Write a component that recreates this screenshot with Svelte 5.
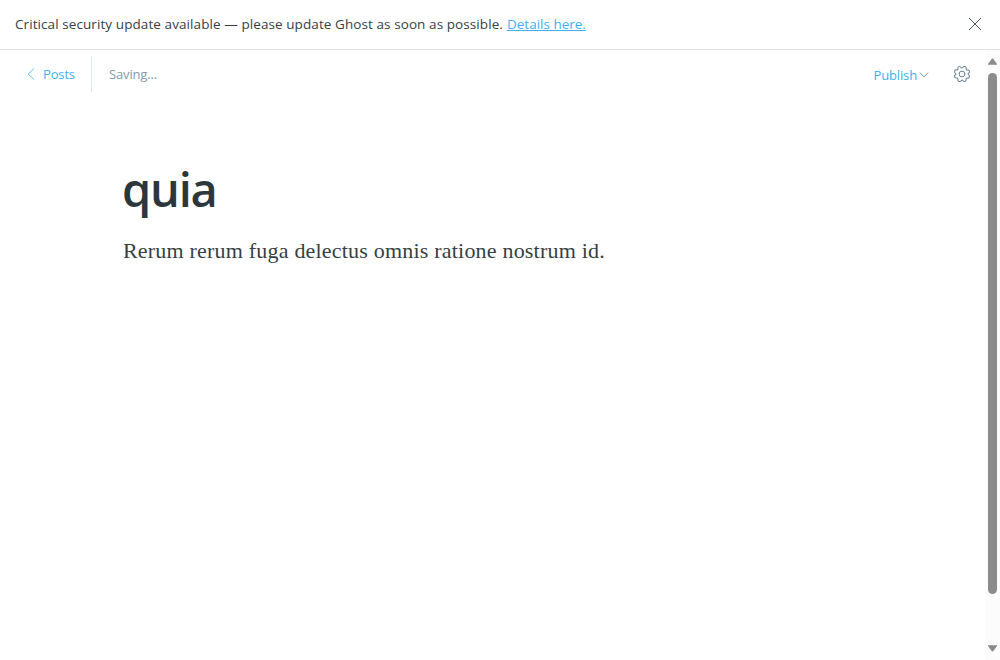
<script>
  const notice = 'Critical security update available — please update Ghost as soon as possible.';
  const title = 'quia';
  const body = 'Rerum rerum fuga delectus omnis ratione nostrum id.';
</script>

<div class="app">
  <aside class="alert">
    <div class="message"><span class="notice">{notice}</span><a href="#details">Details here.</a></div>
    <button class="close" aria-label="Close">
      <svg width="14" height="14" viewBox="0 0 14 14"><path d="M1 1l12 12M13 1L1 13" /></svg>
    </button>
  </aside>

  <div class="viewport">
    <main>
      <header>
        <a class="back" href="#posts">
          <svg width="8" height="12" viewBox="0 0 8 12"><path d="M7 .7L1.2 6 7 11.6" /></svg>
          <span>Posts</span>
        </a>
        <span class="status">Saving...</span>
        <button class="publish">
          <span>Publish</span>
          <svg width="10" height="6" viewBox="0 0 10 6"><path d="M1 .7l4 4.2L9 .7" /></svg>
        </button>
        <button class="settings" aria-label="Settings">
          <svg width="18" height="18" viewBox="0 0 18 18">
            <path d="M7.2 2.4C7.5.5 10.5.5 10.8 2.4C11.1 3.6 11.7 3.8 12.7 3.2C14.3 2.3 15.9 4 14.9 5.5C14.2 6.5 14.5 7 15.6 7.3C17.4 7.7 17.4 10.3 15.6 10.7C14.5 11 14.2 11.5 14.9 12.5C15.9 14 14.3 15.7 12.7 14.8C11.7 14.2 11.1 14.4 10.8 15.6C10.5 17.5 7.5 17.5 7.2 15.6C6.9 14.4 6.3 14.2 5.3 14.8C3.7 15.7 2.1 14 3.1 12.5C3.8 11.5 3.5 11 2.4 10.7C.6 10.3.6 7.7 2.4 7.3C3.5 7 3.8 6.5 3.1 5.5C2.1 4 3.7 2.3 5.3 3.2C6.3 3.8 6.9 3.6 7.2 2.4Z" transform="rotate(22.5 9 9)" />
            <circle cx="9" cy="9" r="2.9" />
          </svg>
        </button>
      </header>
      <article>
        <h1><span>{title}</span></h1>
        <p><span>{body}</span></p>
      </article>
    </main>
    <div class="scrollbar">
      <svg width="9" height="7" viewBox="0 0 9 7"><path d="M4 .5h1L9 6v.7H0V6z" /></svg>
      <div class="thumb"></div>
      <svg class="down" width="9" height="7" viewBox="0 0 9 7"><path d="M0 .3h9V1L5 6.5H4L0 1z" /></svg>
    </div>
  </div>
</div>

<style>
  :global(body) { margin: 0; background: #fff; }
  .app {
    display: flex;
    flex-direction: column;
    height: 660px;
    overflow: hidden;
    font: 13px/20px "Open Sans", "Noto Sans", sans-serif;
    color: #343f44;
  }
  button { border: 0; padding: 0; background: none; font: inherit; display: flex; align-items: center; }
  svg { display: block; fill: none; stroke: currentColor; flex: none; }
  a { color: #3eb0ef; }
  .alert {
    box-sizing: border-box;
    height: 50px;
    flex: none;
    display: flex;
    align-items: center;
    justify-content: space-between;
    padding: 0 18px 1px 15px;
    border-bottom: 1px solid #dfe1e3;
  }
  .message { display: flex; gap: 4px; white-space: nowrap; font-size: 13.5px; letter-spacing: 0; }
  .notice { letter-spacing: .083px; }
  .close { color: #4b555b; }
  .viewport { flex: 1; min-height: 0; display: flex; }
  main { flex: 1; }
  header { display: flex; align-items: center; height: 36px; padding: 6px 14px 0 27px; letter-spacing: -.15px; }
  .back {
    display: flex;
    align-items: center;
    gap: 8px;
    width: 64px;
    height: 36px;
    border-right: 1px solid #e0eaef;
    text-decoration: none;
  }
  .back svg { stroke-width: .8; }
  .status { margin-left: 17px; color: #839aa8; }
  .publish { margin-left: auto; color: #3eb0ef; gap: 2px; padding-top: 1px; letter-spacing: -.15px; }
  .publish svg { color: #6c96ac; }
  .settings { margin-left: 24px; color: #678192; }
  article { padding: 67px 122px 0; color: #343f44; }
  h1 { margin: 0; font-size: 47px; line-height: 60px; font-weight: 600; letter-spacing: -1.2px; color: #2c373d; }
  p { margin: 16px 0 0 1px; font: 22px/32px "Liberation Serif", serif; letter-spacing: .2px; white-space: nowrap; }
  .scrollbar {
    box-sizing: border-box;
    width: 15px;
    background: #fcfcfc;
    color: #8b8b8b;
    display: flex;
    flex-direction: column;
    align-items: center;
    padding: 8px 0 8px;
  }
  .scrollbar svg { fill: currentColor; stroke: none; }
  .thumb { width: 9px; height: 521px; margin-top: 8px; border-radius: 5px; background: #8b8b8b; }
  .down { margin-top: auto; }
</style>
